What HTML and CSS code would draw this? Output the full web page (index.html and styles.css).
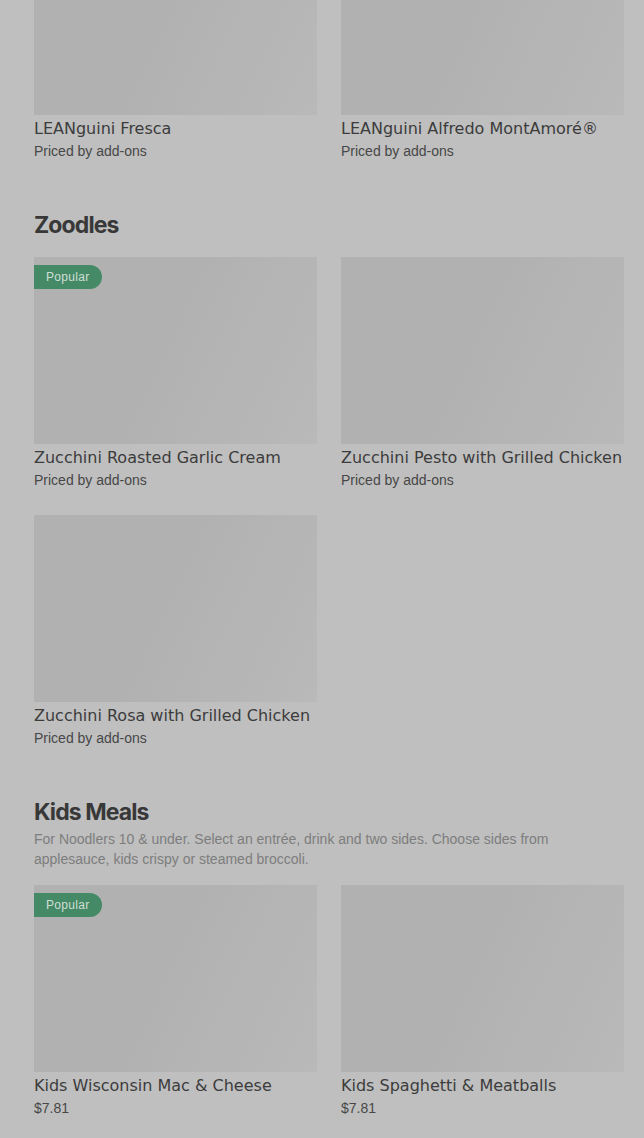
FILE: index.html
```html
<!DOCTYPE html>
<html lang="en">
<head>
    <meta charset="UTF-8">
    <meta name="viewport" content="width=device-width, initial-scale=1.0">
    <title>Menu</title>
    <link rel="stylesheet" href="styles.css">
</head>
<body>
    <div class="menu">
        <section class="section section-first">
            <div class="grid">
                <div class="item">
                    <div class="thumb"></div>
                    <div class="item-name">LEANguini Fresca</div>
                    <div class="item-price">Priced by add-ons</div>
                </div>
                <div class="item">
                    <div class="thumb"></div>
                    <div class="item-name">LEANguini Alfredo MontAmoré®</div>
                    <div class="item-price">Priced by add-ons</div>
                </div>
            </div>
        </section>

        <section class="section">
            <h2>Zoodles</h2>
            <div class="grid">
                <div class="item">
                    <div class="thumb"><span class="badge">Popular</span></div>
                    <div class="item-name">Zucchini Roasted Garlic Cream</div>
                    <div class="item-price">Priced by add-ons</div>
                </div>
                <div class="item">
                    <div class="thumb"></div>
                    <div class="item-name">Zucchini Pesto with Grilled Chicken</div>
                    <div class="item-price">Priced by add-ons</div>
                </div>
                <div class="item">
                    <div class="thumb"></div>
                    <div class="item-name">Zucchini Rosa with Grilled Chicken</div>
                    <div class="item-price">Priced by add-ons</div>
                </div>
            </div>
        </section>

        <section class="section">
            <h2>Kids Meals</h2>
            <p class="section-desc">For Noodlers 10 &amp; under. Select an entrée, drink and two sides. Choose sides from applesauce, kids crispy or steamed broccoli.</p>
            <div class="grid">
                <div class="item">
                    <div class="thumb"><span class="badge">Popular</span></div>
                    <div class="item-name">Kids Wisconsin Mac &amp; Cheese</div>
                    <div class="item-price">$7.81</div>
                </div>
                <div class="item">
                    <div class="thumb"></div>
                    <div class="item-name">Kids Spaghetti &amp; Meatballs</div>
                    <div class="item-price">$7.81</div>
                </div>
            </div>
        </section>
    </div>
</body>
</html>
```

FILE: styles.css
```css
body {
    margin: 0;
    background-color: #bfbfbf;
    font-family: "Liberation Sans", Arial, sans-serif;
    overflow: hidden;
}

.menu {
    padding: 0 20px 0 34px;
    margin-top: -72px;
}

.section {
    margin-bottom: 48px;
}

.section h2 {
    margin: 0;
    font-family: Inter, sans-serif;
    font-size: 23px;
    font-weight: 700;
    line-height: 32px;
    letter-spacing: -0.9px;
    color: #383838;
}

.section-desc {
    margin: 1px 0 0;
    max-width: 540px;
    font-size: 14px;
    line-height: 20px;
    color: #7d7d7d;
}

.grid {
    display: grid;
    grid-template-columns: 283px 283px;
    column-gap: 24px;
    row-gap: 25px;
    margin-top: 16px;
}

.section-first .grid {
    margin-top: 0;
}

.thumb {
    position: relative;
    height: 187px;
    background: linear-gradient(115deg, #b1b1b1 0%, #b1b1b1 45%, #b9b9b9 100%);
}

.badge {
    position: absolute;
    top: 8px;
    left: 0;
    height: 24px;
    padding: 0 13px 0 12px;
    border-radius: 0 12px 12px 0;
    background-color: #458a67;
    color: #cfded5;
    font-size: 12px;
    line-height: 24px;
    letter-spacing: 0.3px;
}

.item-name {
    margin-top: 4px;
    font-family: "DejaVu Sans", sans-serif;
    font-size: 16px;
    line-height: 20px;
    color: #3c3c3c;
    white-space: nowrap;
}

.item-price {
    margin-top: 2px;
    font-size: 14px;
    line-height: 20px;
    color: #474747;
}
```
